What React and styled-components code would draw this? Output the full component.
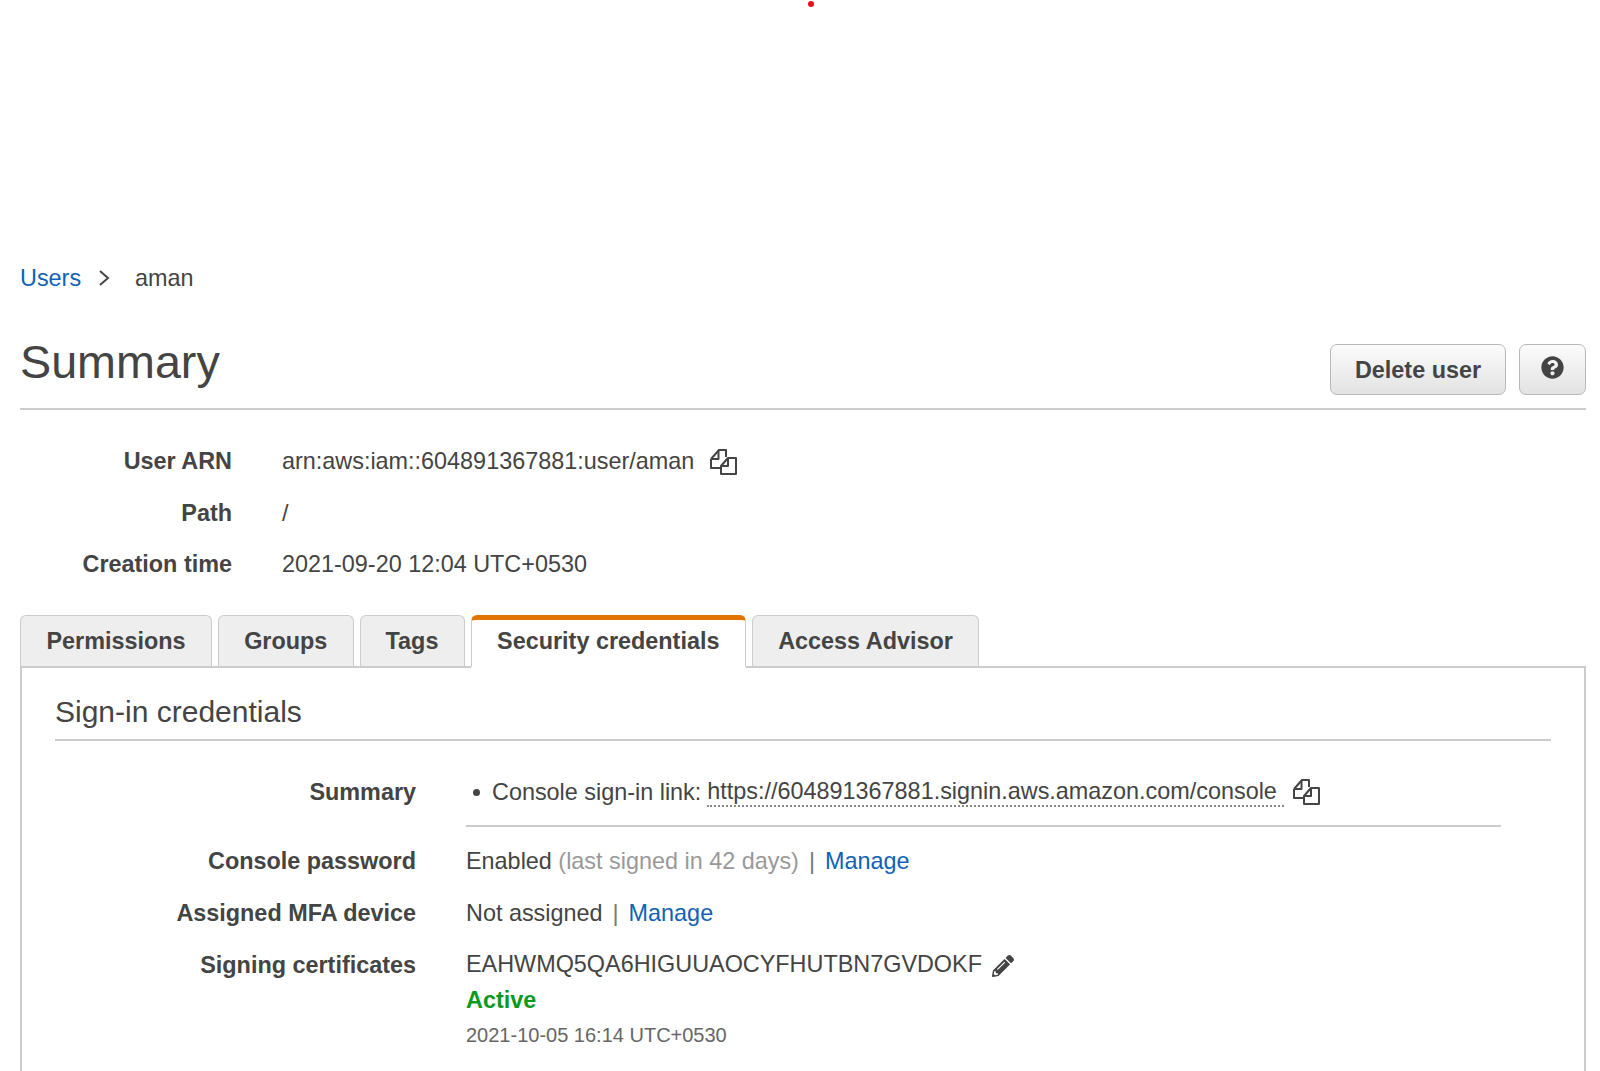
import styled, { createGlobalStyle } from "styled-components";
import { FaPencilAlt, FaQuestionCircle } from "react-icons/fa";

const GlobalStyle = createGlobalStyle`
  html, body {
    margin: 0;
    padding: 0;
    background: #fff;
  }
  body {
    font-family: "Liberation Sans", Arial, sans-serif;
    color: #3c3c3c;
  }
`;

const Page = styled.div`
  position: relative;
  height: 1071px;
  overflow: hidden;
  padding: 261px 14px 0 20px;
  box-sizing: border-box;
  font-size: 23.4px;
`;

const RedDot = styled.span`
  position: absolute;
  left: 808px;
  top: 1px;
  width: 6px;
  height: 6px;
  border-radius: 50%;
  background: #e8101a;
`;

const Breadcrumb = styled.nav`
  display: flex;
  align-items: center;
  height: 34px;
  line-height: 34px;
`;

const Link = styled.a`
  color: #0f62b8;
  text-decoration: none;
`;

const Crumb = styled.span`
  color: #444;
`;

const Chevron = styled.svg`
  width: 12px;
  height: 18px;
  margin: 0 25px 0 17px;
  fill: none;
  stroke: #444;
  stroke-width: 2;
`;

const Header = styled.header`
  display: flex;
  justify-content: space-between;
  align-items: flex-start;
  height: 113px;
  border-bottom: 2px solid #ccc;
`;

const Title = styled.h1`
  margin: 34px 0 0;
  font-size: 46.7px;
  line-height: 66px;
  font-weight: 400;
  color: #444;
`;

const Actions = styled.div`
  display: flex;
  gap: 13px;
  margin-top: 49px;
`;

const Button = styled.button`
  height: 51px;
  width: ${(p) => p.$width}px;
  padding: 1px 0 0;
  display: flex;
  align-items: center;
  justify-content: center;
  border: 1.5px solid #b8b8b8;
  border-radius: 7px;
  background: linear-gradient(#fbfbfb, #e3e3e3);
  font-family: "Liberation Sans", Arial, sans-serif;
  font-size: 23.4px;
  font-weight: 700;
  color: #444;
`;

const HelpIcon = styled(FaQuestionCircle)`
  font-size: 23px;
  color: #444;
  margin-top: -6px;
`;

const Details = styled.dl`
  margin: 26px 0 0;
  display: grid;
  grid-template-columns: 212px 1fr;
  column-gap: 50px;
  grid-auto-rows: 51.5px;
  align-items: center;
`;

const Label = styled.dt`
  margin: 0;
  text-align: right;
  font-weight: 700;
  color: #444;
`;

const Value = styled.dd`
  margin: 0;
  display: flex;
  align-items: center;
  color: #444;
`;

const CopyIconSvg = styled.svg`
  width: 27px;
  height: 26px;
  flex: none;
  margin: 1px 0 0 ${(p) => p.$gap}px;
  fill: none;
  stroke: #444;
  stroke-width: 2;
  stroke-linejoin: round;
`;

const CopyIcon = ({ gap }) => (
  <CopyIconSvg $gap={gap} viewBox="0 0 27 26">
    <path d="M1 10 L9 1 H16 V8" />
    <path d="M1 10 H8.5 V2" />
    <path d="M1 10 V19 H10" />
    <path d="M11 17 L18 9 H26 V25 H11 Z" />
    <path d="M11 17 H18 V10" />
  </CopyIconSvg>
);

const Tabs = styled.div`
  display: flex;
  align-items: flex-start;
  gap: 6px;
  margin-top: 24px;
  height: 51px;
  position: relative;
  z-index: 1;
`;

const Tab = styled.div`
  width: ${(p) => p.$width}px;
  height: ${(p) => (p.$active ? "53px" : "51px")};
  box-sizing: border-box;
  display: flex;
  align-items: center;
  justify-content: center;
  padding: ${(p) => (p.$active ? "0 0 3px" : "1px 0 0")};
  font-weight: 700;
  color: #444;
  background: ${(p) => (p.$active ? "#fff" : "#eee")};
  border: 1.5px solid #ccc;
  border-bottom: ${(p) => (p.$active ? "2px solid #fff" : "none")};
  border-top: ${(p) => (p.$active ? "5px solid #e47400" : "1.5px solid #ccc")};
  border-radius: 6px 6px 0 0;
`;

const Panel = styled.section`
  border: 2px solid #ccc;
  border-bottom: none;
  padding: 0 33px;
  height: 500px;
`;

const PanelTitle = styled.h2`
  margin: 0;
  height: 71px;
  line-height: 88px;
  font-size: 30px;
  font-weight: 400;
  color: #444;
  border-bottom: 2px solid #ccc;
`;

const CredRows = styled.div`
  display: grid;
  grid-template-columns: 361px 1035px;
  column-gap: 50px;
`;

const CredLabel = styled.div`
  font-weight: 700;
  text-align: right;
  color: #444;
  height: ${(p) => p.$h}px;
  padding-top: ${(p) => p.$top || 0}px;
  box-sizing: border-box;
  line-height: 52px;
`;

const CredValue = styled.div`
  height: ${(p) => (p.$h ? `${p.$h}px` : "auto")};
  line-height: 52px;
  color: #444;
`;

const LinkRow = styled.div`
  display: flex;
  align-items: center;
  height: 52px;
  margin: 25px 0 8px;
  padding-bottom: 7px;
  border-bottom: 2px solid #ccc;
`;

const Bullet = styled.span`
  width: 7px;
  height: 7px;
  border-radius: 50%;
  background: #444;
  margin: 2px 12px 0 7px;
`;

const SignInUrl = styled.span`
  border-bottom: 2px dotted #888;
  line-height: 27px;
  margin: 2px 0 0 6px;
  padding-right: 7px;
`;

const Muted = styled.span`
  color: #999;
`;

const Pipe = styled.span`
  color: #777;
  margin: 0 10px;
`;

const Pencil = styled(FaPencilAlt)`
  font-size: 22px;
  color: #444;
  margin: 3px 0 0 10px;
`;

const CertLine = styled.div`
  display: flex;
  align-items: center;
  height: 36px;
  line-height: 35px;
  margin-top: 8px;
`;

const Active = styled.div`
  color: #0a9a1e;
  font-weight: 700;
  height: 35px;
  line-height: 35px;
`;

const CertDate = styled.div`
  font-size: 20px;
  color: #666;
  height: 35px;
  line-height: 35px;
`;

export default function App() {
  return (
    <>
      <GlobalStyle />
      <Page>
        <RedDot />
        <Breadcrumb>
          <Link>Users</Link>
          <Chevron viewBox="0 0 12 18">
            <path d="M2 2 L10 9 L2 16" />
          </Chevron>
          <Crumb>aman</Crumb>
        </Breadcrumb>
        <Header>
          <Title>Summary</Title>
          <Actions>
            <Button $width={176}>Delete user</Button>
            <Button $width={67}>
              <HelpIcon />
            </Button>
          </Actions>
        </Header>
        <Details>
          <Label>User ARN</Label>
          <Value>
            arn:aws:iam::604891367881:user/aman
            <CopyIcon gap={16} />
          </Value>
          <Label>Path</Label>
          <Value>/</Value>
          <Label>Creation time</Label>
          <Value>2021-09-20 12:04 UTC+0530</Value>
        </Details>
        <Tabs>
          <Tab $width={192}>Permissions</Tab>
          <Tab $width={135.5}>Groups</Tab>
          <Tab $width={105}>Tags</Tab>
          <Tab $width={275.5} $active>
            Security credentials
          </Tab>
          <Tab $width={227}>Access Advisor</Tab>
        </Tabs>
        <Panel>
          <PanelTitle>Sign-in credentials</PanelTitle>
          <CredRows>
            <CredLabel $h={94} $top={25}>
              Summary
            </CredLabel>
            <CredValue>
              <LinkRow>
                <Bullet />
                Console sign-in link:
                <SignInUrl>https://604891367881.signin.aws.amazon.com/console</SignInUrl>
                <CopyIcon gap={9} />
              </LinkRow>
            </CredValue>
            <CredLabel $h={52}>Console password</CredLabel>
            <CredValue $h={52}>
              Enabled <Muted>(last signed in 42 days)</Muted>
              <Pipe>|</Pipe>
              <Link>Manage</Link>
            </CredValue>
            <CredLabel $h={52}>Assigned MFA device</CredLabel>
            <CredValue $h={52}>
              Not assigned
              <Pipe>|</Pipe>
              <Link>Manage</Link>
            </CredValue>
            <CredLabel $h={52}>Signing certificates</CredLabel>
            <CredValue>
              <CertLine>
                EAHWMQ5QA6HIGUUAOCYFHUTBN7GVDOKF
                <Pencil />
              </CertLine>
              <Active>Active</Active>
              <CertDate>2021-10-05 16:14 UTC+0530</CertDate>
            </CredValue>
          </CredRows>
        </Panel>
      </Page>
    </>
  );
}
